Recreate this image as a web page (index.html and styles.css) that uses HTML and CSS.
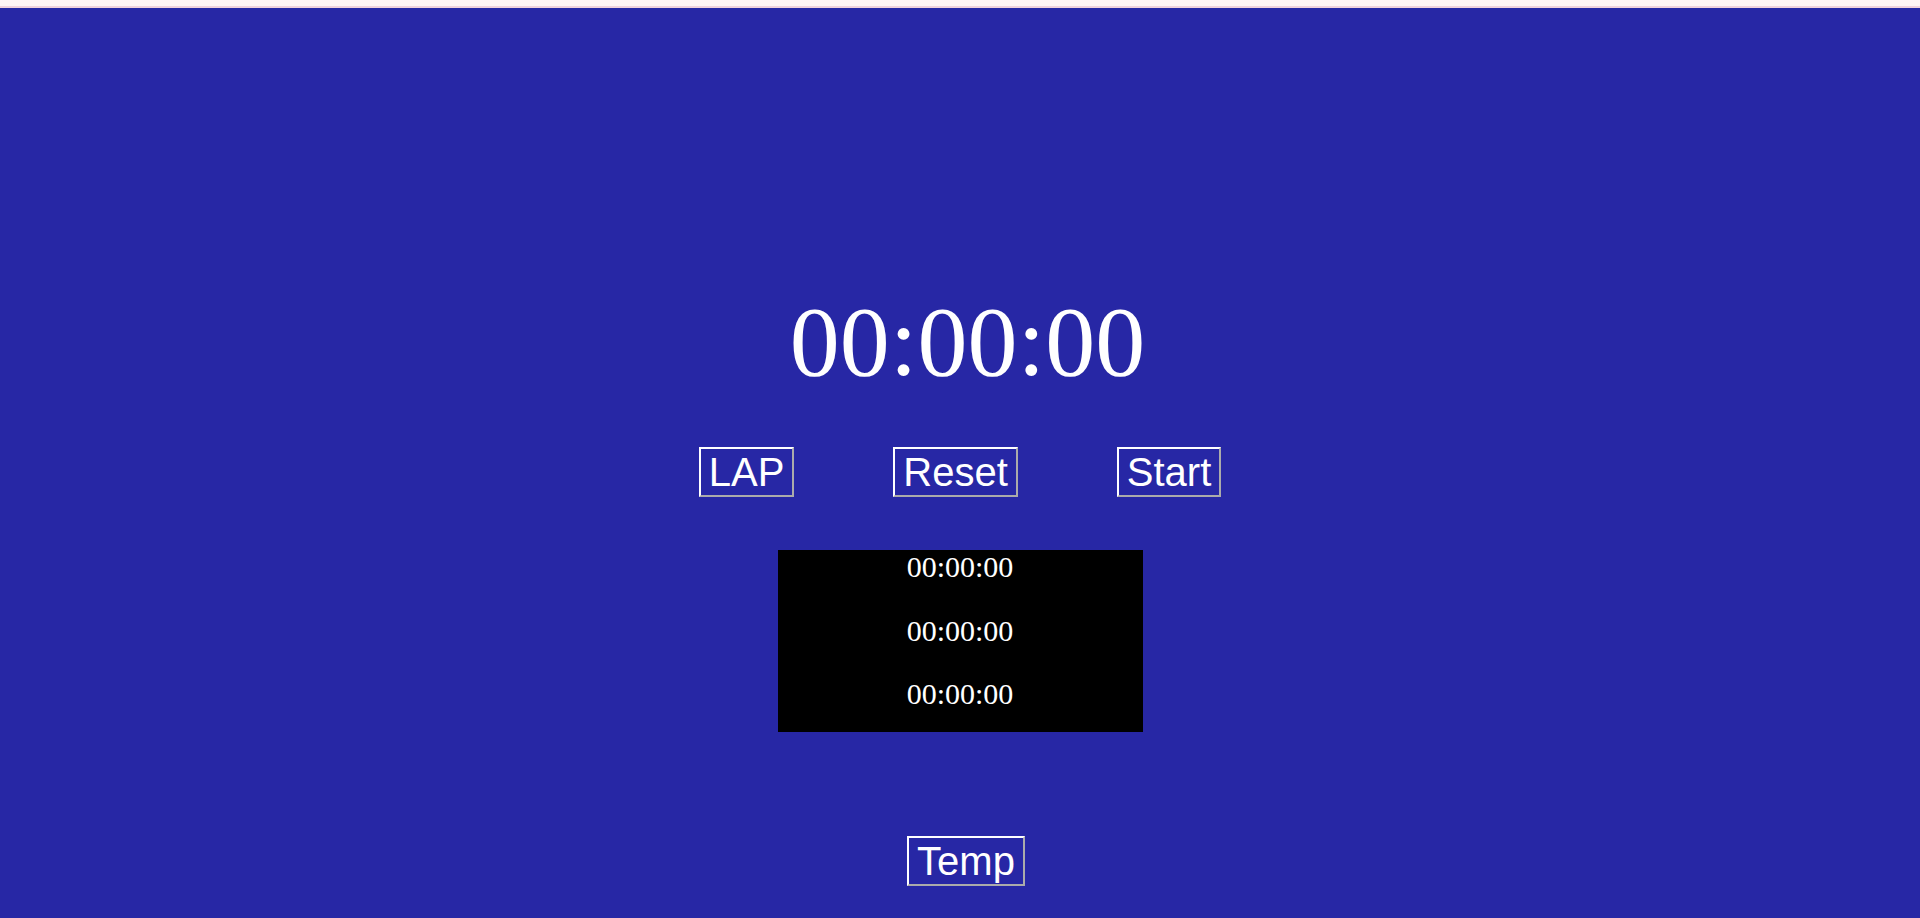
FILE: index.html
```html
<!DOCTYPE html>
<html lang="en">
<head>
<meta charset="utf-8">
<title>Stopwatch</title>
<link rel="stylesheet" href="styles.css">
</head>
<body>
<div class="top-strip"></div>
<main class="stage">
  <div class="clock">00:00:00</div>
  <div class="controls">
    <button class="btn">LAP</button>
    <button class="btn">Reset</button>
    <button class="btn">Start</button>
  </div>
  <div class="laps">
    <div class="lap">00:00:00</div>
    <div class="lap">00:00:00</div>
    <div class="lap">00:00:00</div>
  </div>
  <button class="btn temp">Temp</button>
</main>
</body>
</html>
```
FILE: styles.css
```css
html, body {
  margin: 0;
  padding: 0;
  height: 100%;
  overflow: hidden;
}
body {
  background: #fff5f5;
  font-family: "Liberation Serif", "Times New Roman", serif;
}
.top-strip {
  height: 6px;
  background: #fff5f5;
  border-bottom: 2px solid #f0d2dc;
}
.stage {
  height: 910px;
  background: #2727a5;
  display: flex;
  flex-direction: column;
  align-items: center;
}
.clock {
  margin-top: 276px;
  padding-left: 15px;
  font-size: 100px;
  line-height: 115px;
  color: #fff;
}
.controls {
  margin-top: 48px;
  display: flex;
  gap: 99px;
}
.btn {
  font-family: "Liberation Sans", Arial, sans-serif;
  font-size: 40px;
  line-height: 46px;
  padding: 0 8px;
  color: #fff;
  background: transparent;
  border: 2px outset #fff;
  margin: 0;
  cursor: pointer;
}
.laps {
  margin-top: 53px;
  width: 365px;
  height: 182px;
  background: #000;
  display: flex;
  flex-direction: column;
  align-items: center;
  gap: 29px;
}
.lap {
  color: #fff;
  font-size: 30px;
  line-height: 34.5px;
}
.temp {
  margin-top: 104px;
  margin-left: 12px;
}
```
